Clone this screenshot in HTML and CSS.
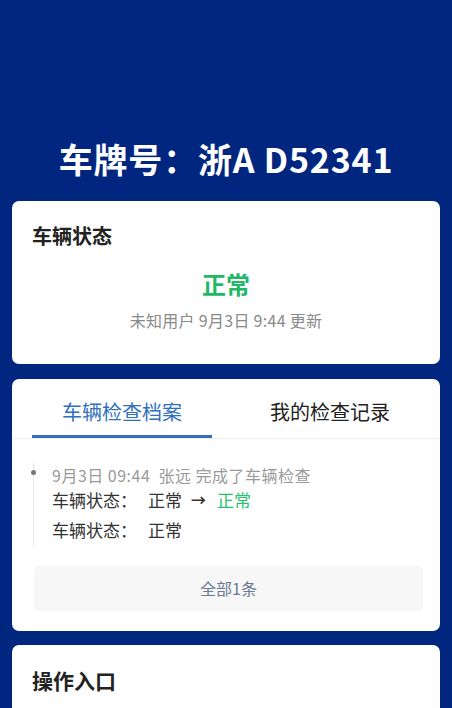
FILE: index.html
```html
<!DOCTYPE html>
<html lang="zh-CN">
<head>
<meta charset="utf-8">
<link rel="stylesheet" href="styles.css">
</head>
<body>
<div class="page">
  <h1 class="plate">车牌号：浙A D52341</h1>

  <section class="card status-card">
    <h2 class="card-title">车辆状态</h2>
    <div class="status-value">正常</div>
    <div class="status-meta">未知用户 9月3日 9:44 更新</div>
  </section>

  <section class="card record-card">
    <div class="tabs">
      <div class="tab active">车辆检查档案</div>
      <div class="tab">我的检查记录</div>
    </div>
    <div class="timeline">
      <div class="tl-item">
        <span class="tl-dot"></span>
        <div class="tl-head">9月3日 09:44&nbsp; 张远 完成了车辆检查</div>
        <div class="tl-row"><span class="tl-label">车辆状态：</span><span>正常</span><span class="arrow">→</span><span class="ok">正常</span></div>
        <div class="tl-row second"><span class="tl-label">车辆状态：</span><span>正常</span></div>
      </div>
    </div>
    <div class="more-btn">全部1条</div>
  </section>

  <section class="card ops-card">
    <h2 class="card-title big">操作入口</h2>
  </section>
</div>
</body>
</html>
```

FILE: styles.css
```css
html, body {
  margin: 0;
  padding: 0;
}
body {
  background: #002680;
  font-family: "Noto Sans CJK SC", "Noto Sans", sans-serif;
  color: #333;
}
.page {
  padding: 135px 12px 0;
  display: flex;
  flex-direction: column;
}
.plate {
  margin: 0 0 18px;
  color: #fff;
  font-size: 34px;
  font-weight: 700;
  text-align: center;
  line-height: 48px;
  height: 48px;
  letter-spacing: 0.8px;
}
.card {
  background: #fff;
  border-radius: 7px;
  box-sizing: border-box;
}
.status-card {
  padding: 20px 20px 0;
  height: 163px;
  margin-bottom: 15px;
}
.card-title {
  margin: 0;
  font-size: 20px;
  font-weight: 700;
  color: #222;
  line-height: 30px;
}
.card-title.big {
  font-size: 21px;
}
.status-value {
  margin-top: 17px;
  text-align: center;
  color: #1fb866;
  font-size: 24px;
  font-weight: 700;
  line-height: 32px;
}
.status-meta {
  margin-top: 8px;
  text-align: center;
  color: #8a8a8a;
  font-size: 16px;
  line-height: 24px;
  letter-spacing: 0.3px;
}
.record-card {
  height: 252px;
  margin-bottom: 14px;
}
.tabs {
  display: flex;
  justify-content: space-between;
  padding: 0 20px;
  border-bottom: 1px solid #eeeeee;
}
.tab {
  width: 180px;
  height: 59px;
  box-sizing: border-box;
  padding-top: 8px;
  text-align: center;
  font-size: 20px;
  color: #222;
  line-height: 50px;
}
.tab.active {
  color: #3070be;
  border-bottom: 3px solid #3070be;
}
.timeline {
  padding: 24px 20px 0 21px;
}
.tl-item {
  position: relative;
  padding-left: 18px;
  border-left: 1px solid #e8e8e8;
  padding-bottom: 3px;
}
.tl-dot {
  position: absolute;
  left: -3px;
  top: 7px;
  width: 5px;
  height: 5px;
  border-radius: 50%;
  background: #777;
}
.tl-head {
  font-size: 16px;
  color: #9a9a9a;
  line-height: 24px;
  letter-spacing: 0.5px;
}
.tl-row {
  font-size: 17px;
  color: #333;
  line-height: 26px;
  display: flex;
  align-items: center;
}
.tl-row.second {
  margin-top: 4px;
}
.tl-label {
  width: 96px;
}
.arrow {
  margin: 0 11px 0 9px;
  font-size: 15px;
  font-weight: 700;
}
.ok {
  color: #2cbf73;
}
.more-btn {
  margin: 20px 17px 0 22px;
  height: 45px;
  line-height: 45px;
  background: #f7f7f8;
  border-radius: 5px;
  text-align: center;
  font-size: 16px;
  color: #6b7a92;
}
.ops-card {
  padding: 20px 20px;
  height: 100px;
}
```
